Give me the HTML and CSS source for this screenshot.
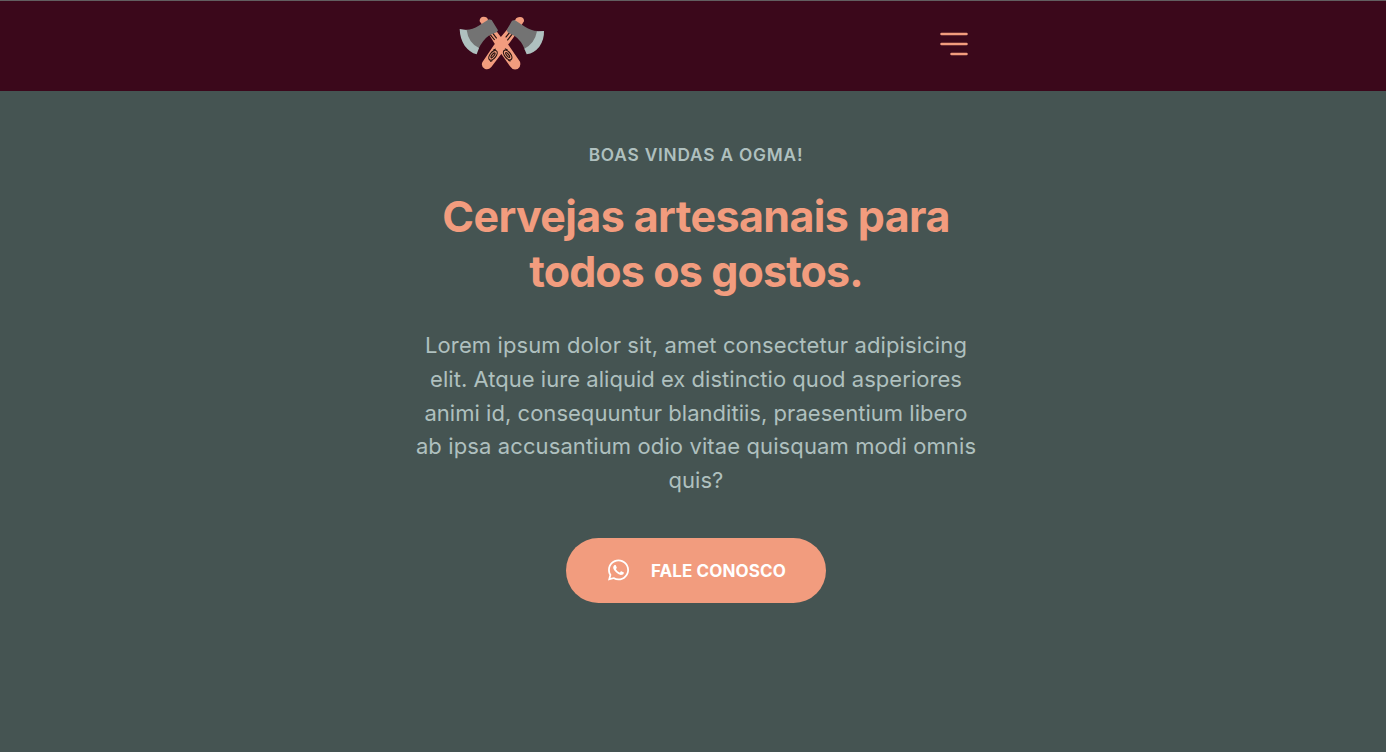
FILE: index.html
```html
<!DOCTYPE html>
<html lang="pt-BR">
<head>
<meta charset="utf-8">
<title>Ogma</title>
<link rel="stylesheet" href="styles.css">
</head>
<body>
<header class="header">
  <svg class="logo" viewBox="0 0 312 216" aria-label="Ogma">
    <!-- Handles -->
    <path fill="#f29c7e" d="M89 49Q88 36 101 35Q112 35 114 44L152 95L168 109L210 170Q214 186 203 192Q188 197 180 184L146 136L118 90Z"/>
    <path fill="#f29c7e" d="M222 49Q223 37 210 36Q199 36 196 44L157 91L132 120L97 172Q92 184 104 191Q115 196 124 186L160 139L194 92Z"/>
    <!-- Wood grain -->
    <g fill="none" stroke="#241310" stroke-width="3.500">
      <path d="M120 88L134 105M127 83L140 100M190 83L172 106M181 80L167 97"/>
      <g transform="translate(129 151) rotate(38)"><ellipse rx="9" ry="17"/><ellipse rx="3" ry="9"/><path d="M-9 -12L-5 -20M8 13L5 20"/></g>
      <g transform="translate(173 150) rotate(-38)"><ellipse rx="9" ry="17"/><ellipse rx="3" ry="9"/><path d="M9 -12L5 -20M-8 13L-5 20"/></g>
    </g>
    <!-- Left head -->
    <path fill="#737373" d="M48 74Q68 74 86 62L117 43L125 45L144 76L140 82L118 91Q99 104 84 134Q52 117 48 74Z"/>
    <path fill="#afc0bf" d="M29 72L50 75Q55 114 87 129L80 148Q59 142 44 122Q30 101 29 72Z"/>
    <!-- Right head -->
    <path fill="#737373" d="M263 78Q243 77 225 65L194 45L186 47L170 75L173 82L194 93Q214 106 225 135Q258 119 263 78Z"/>
    <path fill="#afc0bf" d="M282 78L261 79Q254 116 223 131L230 148Q253 144 268 125Q283 104 282 78Z"/>
  </svg>
  <svg class="menu" viewBox="0 0 28 24" stroke="#f29c7e" stroke-width="2.5" stroke-linecap="round">
    <path d="M1.5 2h25M1.5 12h25M11.5 22h15"/>
  </svg>
</header>
<main class="hero">
  <p class="eyebrow">BOAS VINDAS A OGMA!</p>
  <h1 class="title">Cervejas artesanais para<br><span class="title-end">todos os gostos.</span></h1>
  <p class="lead"><span class="wide">Lorem ipsum dolor sit, amet consectetur adipisicing</span><br>elit. Atque iure aliquid ex distinctio quod asperiores<br>animi id, consequuntur blanditiis, praesentium libero<br><span class="wide">ab ipsa accusantium odio vitae quisquam modi omnis</span><br>quis?</p>
  <a class="button" href="#">
    <svg class="whatsapp" viewBox="0 0 448 512" fill="#fff"><path d="M380.900 97.100C339 55.100 283.200 32 223.900 32c-122.400 0-222 99.600-222 222 0 39.100 10.200 77.300 29.600 111L0 480l117.700-30.900c32.400 17.700 68.900 27 106.100 27h.1c122.300 0 224.100-99.600 224.100-222 0-59.300-25.200-115-67.100-157zm-157 341.600c-33.200 0-65.700-8.900-94-25.700l-6.700-4-69.800 18.300L72 359.200l-4.400-7c-18.500-29.400-28.200-63.300-28.200-98.200 0-101.700 82.800-184.500 184.600-184.500 49.300 0 95.600 19.200 130.400 54.100 34.800 34.900 56.200 81.200 56.100 130.500 0 101.800-84.900 184.600-186.600 184.600zm101.200-138.200c-5.500-2.800-32.800-16.200-37.900-18-5.100-1.900-8.800-2.800-12.500 2.800-3.700 5.600-14.300 18-17.600 21.800-3.200 3.700-6.500 4.200-12 1.400-32.600-16.300-54-29.100-75.500-66-5.700-9.800 5.700-9.100 16.300-30.300 1.800-3.700.9-6.900-.5-9.700-1.400-2.800-12.500-30.100-17.100-41.200-4.500-10.800-9.100-9.300-12.500-9.500-3.200-.2-6.900-.2-10.600-.2-3.700 0-9.700 1.400-14.800 6.900-5.100 5.600-19.400 19-19.400 46.300 0 27.300 19.900 53.700 22.600 57.400 2.800 3.700 39.100 59.700 94.800 83.800 35.200 15.200 49 16.500 66.600 13.900 10.700-1.600 32.800-13.400 37.400-26.400 4.600-13 4.600-24.100 3.200-26.400-1.300-2.500-5-3.900-10.500-6.600z"/></svg>
    <span class="button-label">FALE CONOSCO</span>
  </a>
</main>
</body>
</html>
```
FILE: styles.css
```css
* { box-sizing: border-box; }
body { margin: 0; min-height: 100vh; background: #455452; font-family: Inter, sans-serif; }
.header { height: 91px; display: flex; justify-content: space-between; align-items: flex-start; padding: 4px 418px 0 450px; background: #3b081b; border-top: 1px solid #625e60; }
.logo { width: 104px; height: 72px; }
.menu { width: 28px; height: 24px; margin-top: 27px; }
.hero { display: flex; flex-direction: column; align-items: center; padding: 50px 0 0 6px; text-align: center; white-space: nowrap; }
.eyebrow { margin: 0; font-size: 17.300px; font-weight: 600; line-height: 27px; letter-spacing: 0.8px; color: #afc0bf; }
.title { margin: 21px 0 0; font-size: 43px; font-weight: 700; line-height: 55px; letter-spacing: -0.62px; color: #f29c7e; }
.title-end { letter-spacing: -0.9px; }
.lead { margin: 30px 0 0; font-size: 22px; line-height: 33.750px; letter-spacing: 0.03px; color: #afc0bf; }
.wide { letter-spacing: 0.11px; }
.button { display: flex; align-items: center; gap: 22px; width: 260px; height: 65px; margin-top: 40px; padding-left: 42px; border-radius: 33px; background: #f29c7e; color: #fff; font-size: 17px; font-weight: 700; letter-spacing: 0.1px; text-decoration: none; }
.whatsapp { width: 21px; height: 24px; }
.button-label { padding-top: 1px; }
```
